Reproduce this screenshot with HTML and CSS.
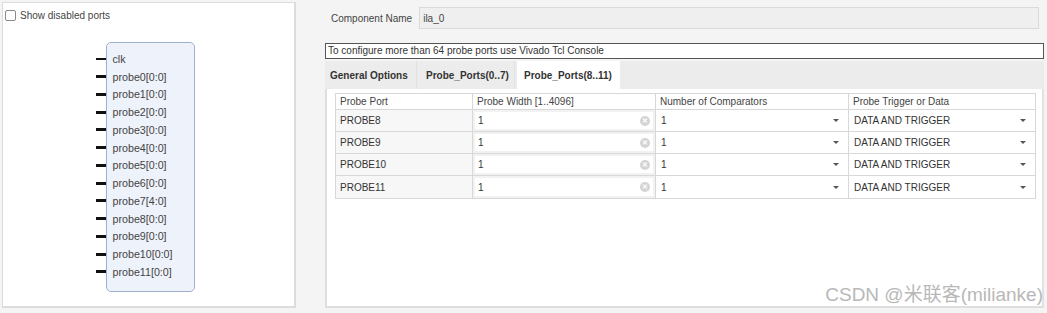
FILE: index.html
```html
<!DOCTYPE html>
<html lang="en">
<head>
  <meta charset="UTF-8">
  <title>ILA Customize</title>
  <link rel="stylesheet" href="styles.css">
</head>
<body>
  <div class="page">
    <div class="symbol-pane">
      <label class="check-row"><span class="check-box"></span>Show disabled ports</label>
      <div class="symbol">
        <div class="block">
          <div class="port"><span class="pin thin"></span>clk</div>
          <div class="port"><span class="pin"></span>probe0[0:0]</div>
          <div class="port"><span class="pin"></span>probe1[0:0]</div>
          <div class="port"><span class="pin"></span>probe2[0:0]</div>
          <div class="port"><span class="pin"></span>probe3[0:0]</div>
          <div class="port"><span class="pin"></span>probe4[0:0]</div>
          <div class="port"><span class="pin"></span>probe5[0:0]</div>
          <div class="port"><span class="pin"></span>probe6[0:0]</div>
          <div class="port"><span class="pin"></span>probe7[4:0]</div>
          <div class="port"><span class="pin"></span>probe8[0:0]</div>
          <div class="port"><span class="pin"></span>probe9[0:0]</div>
          <div class="port"><span class="pin"></span>probe10[0:0]</div>
          <div class="port"><span class="pin"></span>probe11[0:0]</div>
        </div>
      </div>
    </div>

    <div class="config-pane">
      <div class="name-row">
        <span class="name-label">Component Name</span>
        <div class="name-input">ila_0</div>
      </div>
      <div class="notice">To configure more than 64 probe ports use Vivado Tcl Console</div>
      <div class="tabs">
        <div class="tab">General Options</div>
        <div class="tab">Probe_Ports(0..7)</div>
        <div class="tab active">Probe_Ports(8..11)</div>
      </div>
      <div class="tab-body">
        <div class="grid">
          <div class="hd">Probe Port</div>
          <div class="hd">Probe Width [1..4096]</div>
          <div class="hd">Number of Comparators</div>
          <div class="hd">Probe Trigger or Data</div>

          <div class="cell name">PROBE8</div>
          <div class="cell edit"><span>1</span><span class="clear">&#x2715;</span></div>
          <div class="cell combo"><span>1</span><span class="caret"></span></div>
          <div class="cell combo"><span>DATA AND TRIGGER</span><span class="caret"></span></div>

          <div class="cell name">PROBE9</div>
          <div class="cell edit"><span>1</span><span class="clear">&#x2715;</span></div>
          <div class="cell combo"><span>1</span><span class="caret"></span></div>
          <div class="cell combo"><span>DATA AND TRIGGER</span><span class="caret"></span></div>

          <div class="cell name">PROBE10</div>
          <div class="cell edit"><span>1</span><span class="clear">&#x2715;</span></div>
          <div class="cell combo"><span>1</span><span class="caret"></span></div>
          <div class="cell combo"><span>DATA AND TRIGGER</span><span class="caret"></span></div>

          <div class="cell name">PROBE11</div>
          <div class="cell edit"><span>1</span><span class="clear">&#x2715;</span></div>
          <div class="cell combo"><span>1</span><span class="caret"></span></div>
          <div class="cell combo"><span>DATA AND TRIGGER</span><span class="caret"></span></div>
        </div>
        <div class="watermark">CSDN @米联客(milianke)</div>
      </div>
    </div>
  </div>
</body>
</html>
```

FILE: styles.css
```css
* {
  margin: 0;
  padding: 0;
  box-sizing: border-box;
}
body {
  width: 1047px;
  height: 313px;
  background: #f4f4f4;
  color: #333;
  font-family: 'Liberation Sans', Arial, 'Noto Sans CJK SC', sans-serif;
  font-size: 10px;
  overflow: hidden;
}
.page {
  display: flex;
  gap: 29px;
  padding: 2px 3px 5px 2px;
  height: 313px;
}

/* left: symbol preview */
.symbol-pane {
  width: 295px;
  background: #fff;
  border: 1px solid #dcdcdc;
  border-right-width: 2px;
  border-bottom-width: 2px;
  display: flex;
  flex-direction: column;
}
.check-row {
  display: flex;
  align-items: center;
  gap: 4px;
  padding: 4px 0 0 2px;
  height: 20px;
  color: #444;
}
.check-box {
  width: 11px;
  height: 11px;
  border: 1px solid #8a8a8a;
  border-radius: 2px;
  background: #fff;
}
.symbol {
  display: flex;
  justify-content: center;
  padding: 19px 0 0 3px;
}
.block {
  width: 89px;
  height: 250px;
  background: #eef2fa;
  border: 1px solid #9fb0cf;
  border-radius: 5px;
  padding: 7px 0 0 0;
}
.port {
  display: flex;
  align-items: center;
  height: 17.75px;
  color: #444;
  font-size: 10.7px;
  margin-left: -11px;
}
.pin {
  width: 10px;
  height: 3px;
  background: #111;
  margin-right: 7px;
}
.pin.thin {
  height: 2px;
}

/* right: configuration */
.config-pane {
  flex: 1;
  display: flex;
  flex-direction: column;
}
.name-row {
  display: flex;
  align-items: center;
  height: 41px;
  padding: 4px 5px 13px 6px;
  gap: 7px;
}
.name-label {
  color: #444;
}
.name-input {
  flex: 1;
  height: 22px;
  background: #efefef;
  border: 1px solid #dadada;
  display: flex;
  align-items: center;
  padding-left: 3px;
  color: #444;
}
.notice {
  height: 16px;
  border: 1px solid #555;
  background: #fff;
  padding-left: 2px;
  line-height: 14px;
  color: #333;
}
.tabs {
  display: flex;
  gap: 2px;
  margin-top: 2px;
  height: 28px;
  background: #ececec;
}
.tab {
  display: flex;
  align-items: center;
  padding: 0 7px;
  font-weight: bold;
  color: #333;
  white-space: nowrap;
  border-right: 1px solid #e2e2e2;
}
.tab:first-child {
  width: 92px;
  padding-left: 5px;
}
.tab:nth-child(2) {
  width: 96px;
}
.tab.active {
  width: 103px;
  background: #fff;
  border-right: none;
}
.tab-body {
  flex: 1;
  background: #fff;
  border-left: 2px solid #dedede;
  border-right: 2px solid #e2e2e2;
  border-bottom: 2px solid #dedede;
  padding: 4px 6px 0 8px;
  display: flex;
  flex-direction: column;
}

.grid {
  display: grid;
  grid-template-columns: 137px 183px 193px 186px;
  grid-template-rows: 16px repeat(4, 22px);
  border: 1px solid #d8d8d8;
}
.hd {
  display: flex;
  align-items: center;
  padding-left: 4px;
  color: #444;
  border-right: 1px solid #d8d8d8;
  border-bottom: 1px solid #d8d8d8;
}
.cell {
  display: flex;
  align-items: center;
  padding: 0 5px;
  color: #333;
  border-right: 1px solid #d8d8d8;
  border-bottom: 1px solid #d8d8d8;
}
.hd:nth-child(4n),
.cell:nth-child(4n) {
  border-right: none;
}
.grid > :nth-last-child(-n+4) {
  border-bottom: none;
}
.cell.name {
  background: #f7f7f7;
  padding-left: 4px;
}
.cell.edit {
  justify-content: space-between;
  background: #fff;
  box-shadow: inset 0 0 0 2px #f2f2f2;
  padding-left: 5px;
}
.clear {
  width: 10px;
  height: 10px;
  border-radius: 50%;
  background: #d4d4d4;
  color: #fff;
  font-size: 7px;
  line-height: 10px;
  text-align: center;
  font-weight: bold;
}
.cell.combo {
  justify-content: space-between;
  padding-right: 9px;
}
.caret {
  width: 0;
  height: 0;
  border-left: 3px solid transparent;
  border-right: 3px solid transparent;
  border-top: 3px solid #555;
}
.watermark {
  margin-top: auto;
  align-self: flex-end;
  margin-right: -7px;
  margin-bottom: 1px;
  font-size: 19px;
  line-height: 20px;
  color: #b8b8b8;
}
```
